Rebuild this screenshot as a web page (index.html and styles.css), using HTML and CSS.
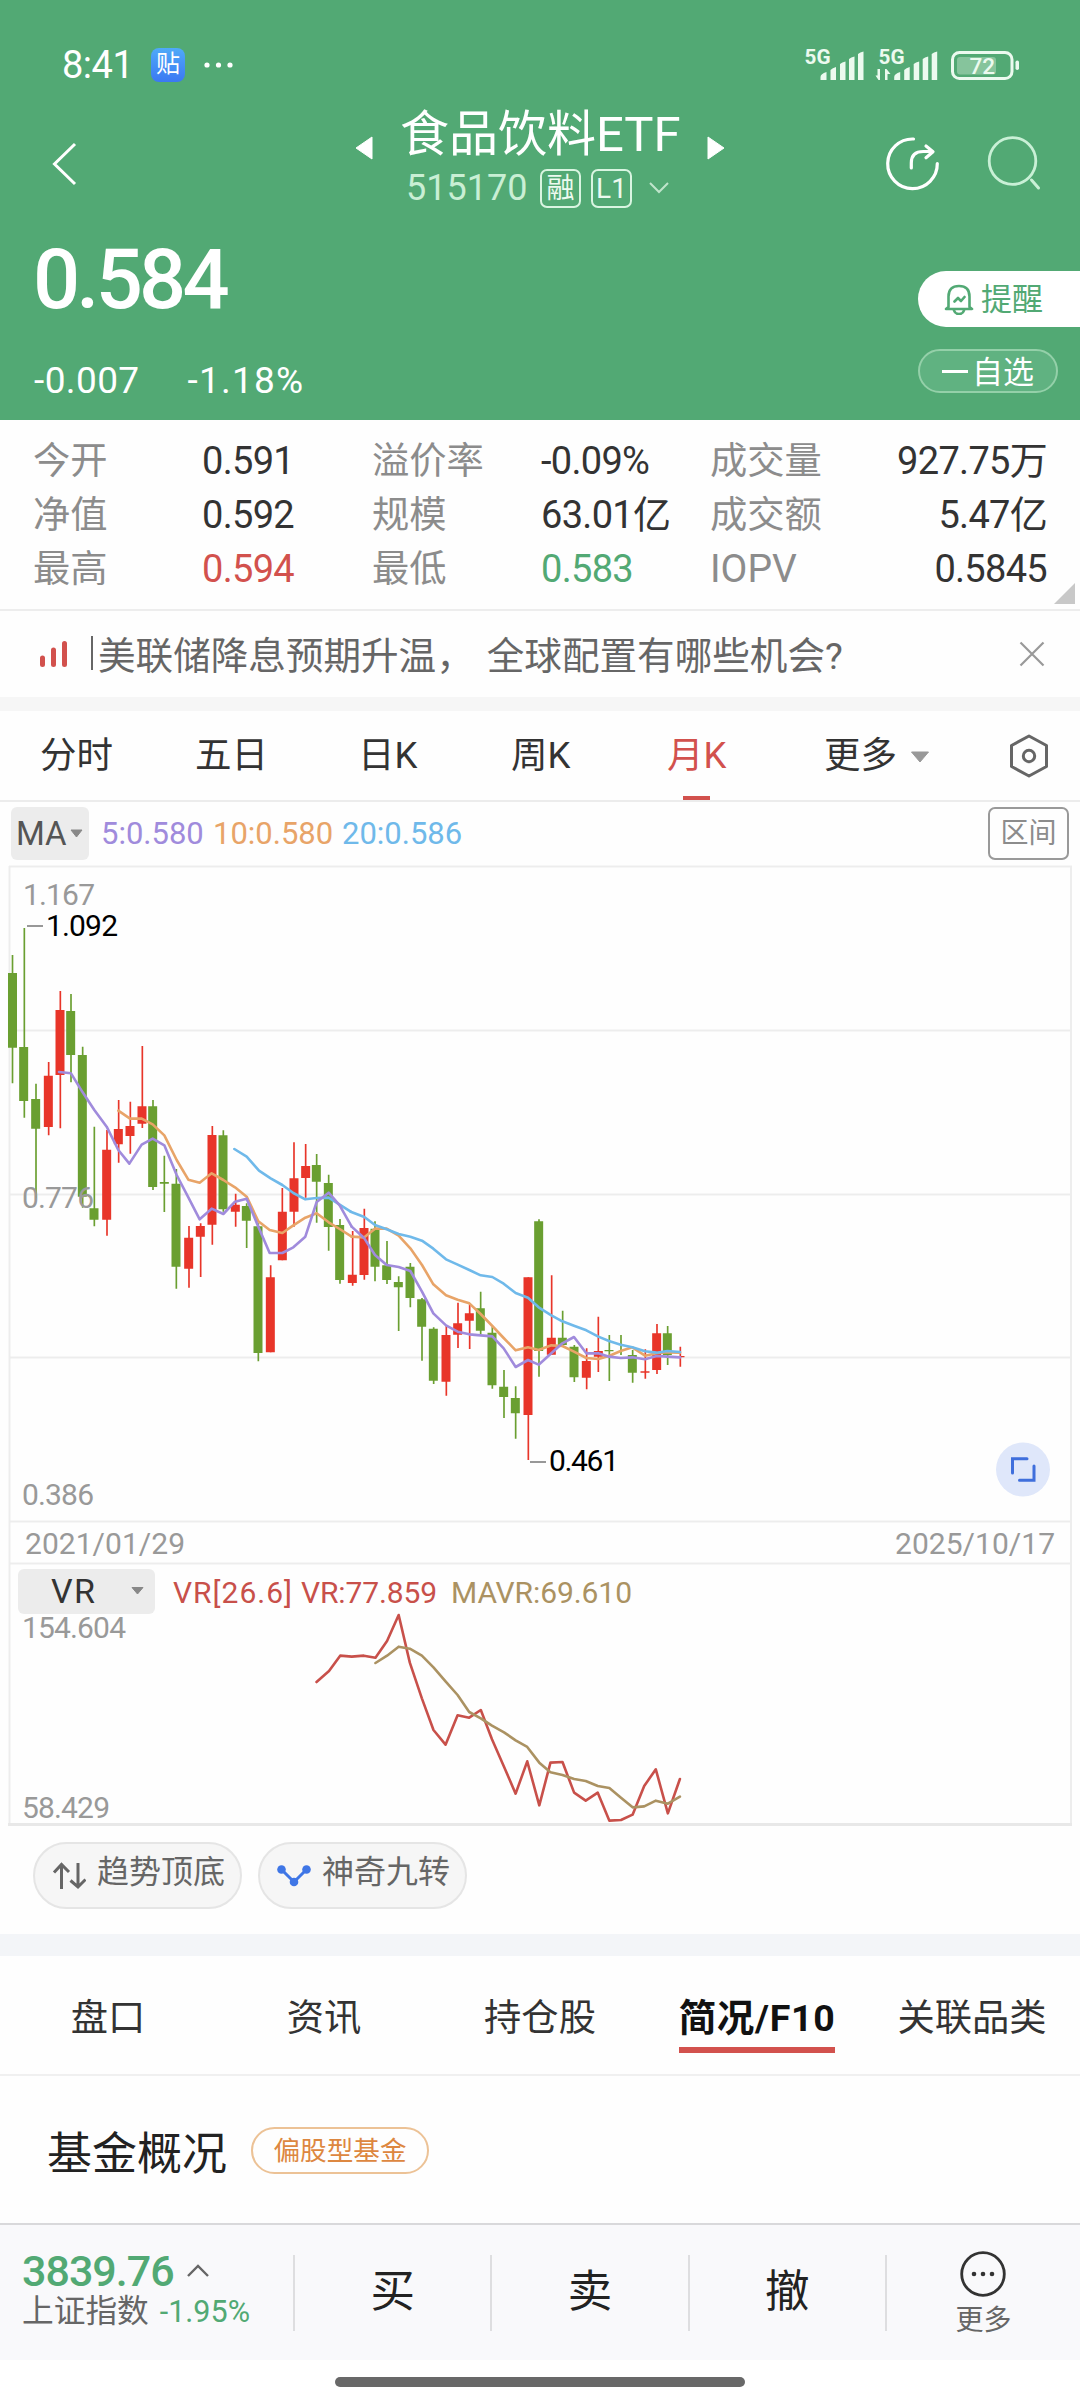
FILE: index.html
```html
<!DOCTYPE html>
<html lang="zh-CN">
<head>
<meta charset="utf-8">
<title>食品饮料ETF 515170</title>
<link rel="stylesheet" href="styles.css">
</head>
<body>
<header class="hero">
  <div class="status">
    <span class="clock">8:41</span>
    <span class="app-badge">贴</span>
    <svg class="dots" width="30" height="8" viewBox="0 0 30 8" fill="#fff"><circle cx="4" cy="4" r="2.6"/><circle cx="15.500" cy="4" r="2.600"/><circle cx="27" cy="4" r="2.600"/></svg>
    <svg class="signals" width="220" height="52" viewBox="803 38 220 52">
      <g fill="#ecfaef">
        <text x="804.500" y="63.300" class="net" textLength="26" lengthAdjust="spacingAndGlyphs">5G</text>
        <text x="878.500" y="63.300" class="net" textLength="26" lengthAdjust="spacingAndGlyphs">5G</text>
        <path id="bars" d="M820.500 79v-3q0-3 6-5v8zM830.500 79V69q2-2 5.500-3v13zM840 79V63q2-2 5.500-2.500V79zM849 79V58q2-2 5.500-2.500V79zM858 79V53q2-2 5.500-2.500V79z"/>
        <use href="#bars" x="73.700"/>
        <path d="M880 68v11h-1.500l-3-4.500h2V68zM885 79V68h1.500l4 5h-3v6z"/>
        <rect x="1015.500" y="59.500" width="3.500" height="9.500" rx="1.700"/>
      </g>
      <rect x="957" y="56" width="39" height="17.500" rx="3" fill="#86c49c"/>
      <rect x="952.500" y="51.500" width="59.500" height="26" rx="7" fill="none" stroke="#ecfaef" stroke-width="3"/>
      <text x="969.500" y="72.800" class="pct" fill="#ecfaef">72</text>
    </svg>
  </div>
  <div class="nav">
    <svg class="back" width="28" height="48" viewBox="0 0 28 48"><path d="M25 4 4.500 24 25 44" fill="none" stroke="#fff" stroke-width="3"/></svg>
    <svg class="tri" width="18" height="24" viewBox="0 0 18 24"><path d="M17 1v22L1 12z" fill="#fff" stroke="#fff" stroke-linejoin="round"/></svg>
    <div class="names">
      <h1>食品饮料ETF</h1>
      <div class="code"><span class="num">515170</span><span class="tag">融</span><span class="tag">L1</span>
        <svg width="22" height="14" viewBox="0 0 22 14"><path d="m2 2 9 9 9-9" fill="none" stroke="#bfe5cb" stroke-width="2"/></svg></div>
    </div>
    <svg class="tri" width="18" height="24" viewBox="0 0 18 24"><path d="M1 1v22l16-11z" fill="#fff" stroke="#fff" stroke-linejoin="round"/></svg>
    <svg class="tools" width="160" height="60" viewBox="884 134 160 60" fill="none" stroke-linecap="round" stroke-linejoin="round">
      <path d="M913.500 139A24.800 24.800 0 1 0 937.300 163.500M911.300 168v-5q0-11.500 12-11.500h9M926 146l7 5.700-7 6" stroke="#fff" stroke-width="3.200"/>
      <circle cx="1012.500" cy="161" r="23.300" stroke="#c9f0d6" stroke-width="2.800"/><path d="m1031.500 180 7 8" stroke="#c9f0d6" stroke-width="3"/>
    </svg>
  </div>
  <div class="quote">
    <div>
      <div class="price">0.584</div>
      <div class="change"><span>-0.007</span><span>-1.18%</span></div>
    </div>
    <div class="actions">
      <div class="remind">
        <svg width="32" height="32" viewBox="0 0 32 32" fill="none" stroke="#52a974" stroke-width="2.600" stroke-linecap="round" stroke-linejoin="round"><path d="M5.500 24V13.500Q5.500 3 16 3t10.500 10.500V24l2.500 2H3zM11 27.500q1 3.500 5 3.500t5-3.500M11.500 18.500l3.500-3.500 3 3 3.500-4"/></svg><span>提醒</span></div>
      <div class="watch"><i></i>自选</div>
    </div>
  </div>
</header>

<section class="stats">
  <span>今开</span><b>0.591</b><span>溢价率</span><b>-0.09%</b><span>成交量</span><b class="r">927.75万</b>
  <span>净值</span><b>0.592</b><span>规模</span><b>63.01亿</b><span>成交额</span><b class="r">5.47亿</b>
  <span>最高</span><b class="up">0.594</b><span>最低</span><b class="down">0.583</b><span class="en">IOPV</span><b class="r">0.5845</b>
  <svg class="corner" width="21" height="21" viewBox="0 0 21 21"><path d="M21 0v21H0z" fill="#c8c8c8"/></svg>
</section>

<section class="notice">
  <svg width="30" height="28" viewBox="0 0 30 28" stroke="#d2514d" stroke-width="5" stroke-linecap="round"><path d="M3.500 18v6.500M14.500 10v14.500M25.500 3.500v21"/></svg>
  <p><i></i>美联储降息预期升温，<span class="gap"></span>全球配置有哪些机会?</p>
  <svg width="26" height="26" viewBox="0 0 26 26"><path d="m1.500 1.500 23 23m0-23-23 23" stroke="#999" stroke-width="2.200"/></svg>
</section>

<nav class="periods">
  <span>分时</span><span>五日</span><span>日K</span><span>周K</span><span class="on">月K</span><span>更多</span>
  <svg width="20" height="12" viewBox="0 0 20 12"><path d="M1.500 1h17L10 11z" fill="#999" stroke="#999" stroke-linejoin="round"/></svg>
  <svg class="gear" width="42" height="46" viewBox="0 0 42 46" fill="none" stroke="#666" stroke-width="3" stroke-linejoin="round"><path d="m21 3 17.500 9.500v21L21 43 3.500 33.500v-21z"/><circle cx="21" cy="23" r="5.700"/></svg>
</nav>

<section class="ma">
  <div class="picker">MA<svg width="13" height="9" viewBox="0 0 13 9"><path d="M1 1h11L6.500 8z" fill="#888" stroke="#888" stroke-linejoin="round"/></svg></div>
  <span class="ma5">5:0.580</span><span class="ma10">10:0.580</span><span class="ma20">20:0.586</span>
  <div class="range">区间</div>
</section>

<section class="chart">
  <svg width="1080" height="961" viewBox="0 865 1080 961">
    <path class="grid" d="M9 866.500H1071V1823M9.500 866V1823M9 1030.500H1071M9 1194.500H1071M9 1357.500H1071M9 1521.500H1071M9 1563.500H1071"/>
    <path d="M8 1824.500H1072" stroke="#e8e8e8" stroke-width="3"/>
    <g class="candles" transform="translate(0 860) scale(.33333)">
      <path class="g wick" d="M37.500 285V670M73 204V773M108 671V1015M213 402V667M248 560V1043M283 800V1099M459 720V990M493 887V1056"/>
      <path class="g body" d="M37.500 339V563M71 561V723M107 717V806M212 453V585M247 585V1010M282 1045V1079M458 739V981M493 966V971"/>
      <path class="d wick" d="M146 606V826M181 393V805M321 810V1127M356 720V908M391 725V881M427 558V804"/>
      <path class="d body" d="M145 647V801M180 450V645M320 869V1079M355 807V853M390 798V828M426 739V791"/>
    </g>
    <g class="candles" transform="translate(0 1100) scale(.33333)">
      <path class="g wick" d="M529 207V566M670 91V335M740 310V444M775 370V784M950 162V368M986 224V452M1020 357V551"/>
      <path class="g body" d="M528 251V500M669 106V328M739 318V362M774 379V759M949 195V245M985 249V381M1019 375V540"/>
      <path class="d wick" d="M567 378V563M602 370V531M637 78V434M707 281V380M812 496V757M847 264V481M882 127V380M917 132V293M1058 393V557"/>
      <path class="d body" d="M566 413V506M601 378V410M636 105V374M706 314V335M811 532V757M847 335V481M882 235V335M917 198V234M1057 524V549"/>
    </g>
    <g class="candles" transform="translate(350 1020) scale(.33333)">
      <path class="g wick" d="M75 604V784M111 663V792M146 769V933M181 729V862M216 834V1022M251 922V1092M392 815V942M427 920V1106M462 1050V1194M497 1099V1256M567 598V1070M638 872V980M673 975V1086M778 945V1083M813 945V1005M848 990V1088M953 918V1035"/>
      <path class="g body" d="M75 626V740M110 736V780M145 786V802M180 740V834M215 838V920M250 926V1082M391 865V932M426 938V1096M461 1100V1131M496 1134V1180M566 604V993M637 953V975M672 980V1072M777 990V994M847 1005V1058M952 940V1005"/>
      <path class="d wick" d="M43 566V779M289 915V1127M324 848V984M359 850V987M535 772V1320M605 766V1004M710 985V1108M745 890V1056M886 988V1076M921 912V1062M991 980V1040"/>
      <path class="d body" d="M42 624V765M288 945V1085M323 910V944M358 880V902M534 772V1185M604 953V1004M709 1023V1073M745 993V1010M885 1054V1058M920 940V1050M990 1008V1012"/>
    </g>
    <g class="lines">
      <g transform="translate(0 860) scale(.33333)">
        <path stroke="#e8a468" d="M355 752 390 776 425 776 458 793 493 826 530 900 565 959 599 968 635 940 670 960 705 982 740 1010 775 1084 809 1110 847 1119 880 1096 916 1073 950 1060 986 1087 1019 1107 1055 1130"/>
        <path stroke="#6fb9ea" d="M703 867 740 890 777 932 812 955 847 975 880 999 916 1018 950 1014 986 1013 1019 1034 1052 1055"/>
        <path stroke="#a08bdc" d="M177 636 213 640 248 697 283 750 320 800 355 870 388 911 425 854 458 836 493 856 530 945 565 1012 599 1078 635 1046 670 1062 705 1025 740 1016 775 1100 809 1179 847 1179 880 1162 916 1130 950 1026 986 998 1019 1036 1055 1100"/>
      </g>
      <g transform="translate(350 1020) scale(.33333)">
        <path stroke="#e8a468" d="M5 650 43 652 75 626 110 626 146 647 181 685 216 735 250 793 288 826 323 839 358 850 392 882 427 918 461 954 497 991 534 982 566 990 604 976 637 978 672 995 709 1014 745 1017 777 1008 812 993 847 982 885 1007 920 1000 952 997 990 998"/>
        <path stroke="#6fb9ea" d="M2 575 43 591 75 615 110 628 146 642 181 650 216 662 250 686 288 718 323 734 358 750 392 766 427 771 461 791 497 819 534 833 566 862 604 886 637 904 672 917 709 931 745 950 777 963 812 974 847 982 885 994 920 998 952 993 990 996"/>
        <path stroke="#a08bdc" d="M5 620 43 655 75 705 110 735 146 741 181 753 216 815 250 880 288 916 323 935 358 943 392 946 427 949 461 985 497 1041 534 1020 566 1034 604 1000 637 970 672 951 709 1000 745 1000 777 1010 812 1014 847 1012 885 1018 920 1008 952 1010 990 1012"/>
      </g>
      <g transform="translate(0 1480) scale(.44643 .33333)">
        <path stroke="#c8504a" d="M709 606 737 573 762 527 788 530 815 527 841 533 867 483 893 405 918 548 945 655 971 750 998 794 1025 706 1051 713 1077 690 1102 778 1129 860 1155 941 1181 844 1208 976 1233 848 1260 846 1286 938 1312 962 1339 938 1365 1022 1391 1020 1417 1004 1443 918 1469 868 1496 1000 1523 897"/>
        <path stroke="#ab9262" d="M841 549 867 527 893 500 918 506 945 527 971 562 998 604 1025 645 1051 696 1077 715 1102 737 1129 757 1155 781 1181 801 1208 848 1233 877 1260 885 1286 897 1312 903 1339 918 1365 924 1391 953 1417 982 1443 979 1469 962 1496 971 1523 950"/>
      </g>
    </g>
    <path d="M27 926H43M530 1462H546" stroke="#777" stroke-width="1.500"/>
    <g class="axis">
      <text x="23" y="904.500" textLength="72">1.167</text>
      <text x="22" y="1207.500" textLength="72">0.776</text>
      <text x="22" y="1505" textLength="72">0.386</text>
      <text x="25" y="1553.500" textLength="160">2021/01/29</text>
      <text x="895" y="1553.500" textLength="160">2025/10/17</text>
      <text x="22" y="1638" textLength="104">154.604</text>
      <text x="22" y="1818" textLength="88">58.429</text>
      <g fill="#000"><text x="46" y="935.500" textLength="72">1.092</text><text x="549" y="1471" textLength="70">0.461</text></g>
      <rect x="18" y="1569" width="137" height="45" rx="6" fill="#ececec"/>
      <text x="51" y="1603" fill="#333" font-size="34" textLength="44">VR</text>
      <path d="M132 1587.500h11l-5.500 6.500z" fill="#888" stroke="#888" stroke-linejoin="round"/>
      <text x="173" y="1603" fill="#c8504a" textLength="119">VR[26.6]</text>
      <text x="301" y="1603" fill="#c8504a" textLength="136">VR:77.859</text>
      <text x="451" y="1603" fill="#ab9262" textLength="181">MAVR:69.610</text>
    </g>
    <circle cx="1023" cy="1469.500" r="27" fill="#dfe7fa"/>
    <path d="M1012.500 1473v-14.300h14.500M1034 1466v14.300h-14.500" fill="none" stroke="#3f6fdc" stroke-width="3" stroke-linecap="round"/>
  </svg>
</section>

<section class="signals-row">
  <div class="chip"><svg width="34" height="28" viewBox="0 0 34 28" fill="none" stroke="#666" stroke-width="3"><path d="M9.500 27V3M2 10.500 9.500 2.500 17 10M26 1v24M18.500 18.500l7.500 6.500 7.500-7.500"/></svg><span>趋势顶底</span></div>
  <div class="chip"><svg width="34" height="24" viewBox="0 0 34 24"><path d="m5 6 12 12L29 6" fill="none" stroke="#3f76e6" stroke-width="3"/><g fill="#3f76e6"><circle cx="4.500" cy="5.500" r="4.300"/><circle cx="29.500" cy="5.500" r="4.300"/><circle cx="17" cy="18" r="4.300"/></g></svg><span>神奇九转</span></div>
</section>

<nav class="sections">
  <span>盘口</span><span>资讯</span><span>持仓股</span><span class="on">简况/F10</span><span>关联品类</span>
</nav>

<section class="fund"><h2>基金概况</h2><span>偏股型基金</span></section>

<footer class="bar">
  <div class="index">
    <div class="pt">3839.76<svg width="24" height="14" viewBox="0 0 24 14"><path d="m2 12 10-10 10 10" fill="none" stroke="#666" stroke-width="2.400"/></svg></div>
    <div class="nm">上证指数<em>-1.95%</em></div>
  </div>
  <div class="act">买</div><div class="act">卖</div><div class="act">撤</div>
  <div class="more">
    <svg width="48" height="48" viewBox="0 0 48 48"><circle cx="24" cy="24" r="21.300" fill="none" stroke="#333" stroke-width="2.800"/><g fill="#333"><circle cx="15" cy="24" r="2.300"/><circle cx="24" cy="24" r="2.300"/><circle cx="33" cy="24" r="2.300"/></g></svg>更多</div>
</footer>
<div class="home"><i></i></div>
</body>
</html>
```
FILE: styles.css
```css
* { box-sizing: border-box; }
body {
  margin: 0;
  width: 1080px;
  height: 2403px;
  overflow: hidden;
  background: #fefefe;
  color: #333;
  font-family: Roboto, "Noto Sans CJK SC", sans-serif;
  font-size: 37px;
  white-space: nowrap;
}
svg { display: block; flex: none; }
h1, h2, p { margin: 0; font-weight: 400; }

.hero { height: 420px; background: #52a974; color: #fff; }
.status { display: flex; align-items: center; height: 98px; padding: 32px 57px 0 62px; }
.clock { width: 89px; font-size: 38px; letter-spacing: -.500px; }
.app-badge {
  width: 34px; height: 34px; border-radius: 8px; text-align: center;
  background: linear-gradient(#4faaf8, #3b78f3); font-size: 24px; line-height: 32px;
}
.dots { margin-left: 18px; }
.signals { margin-left: auto; }
.net { font: 700 20px Roboto, sans-serif; }
.pct { font: 500 22.500px Roboto, sans-serif; }

.nav { display: flex; height: 120px; padding-left: 50px; }
.back { margin-top: 42px; }
.tri { margin: 38px 0 0; }
.back + .tri { margin-left: 277px; }
.names { width: 281px; margin: 0 26px 0 27px; }
.names + .tri { margin-left: 0; }
h1 { height: 70px; font-size: 49px; line-height: 73px; }
.code { display: flex; align-items: center; height: 40px; padding-left: 6px; color: #c9efd4; }
.code .num { width: 134px; font-size: 36px; }
.tag {
  width: 41px; height: 39px; margin-right: 10px; border: 2px solid #d9f5e1; border-radius: 7px;
  color: #ecfaef; font-size: 28px; line-height: 35px; text-align: center;
}
.code svg { margin-left: 6px; }
.tools { margin: 36px 0 0 159px; }

.quote { display: flex; justify-content: space-between; height: 202px; }
.price { height: 120px; padding: 0 0 0 33px; font-size: 83px; line-height: 123px; font-weight: 500; letter-spacing: -3.800px; }
.change { display: flex; gap: 48px; padding: 21px 0 0 34px; line-height: 44px; letter-spacing: .400px; }
.change span + span { letter-spacing: 1.200px; }
.actions { width: 162px; padding-top: 53px; font-size: 31px; }
.remind {
  display: flex; align-items: center; gap: 6px; height: 56px; padding-left: 25px;
  border-radius: 28px 0 0 28px; background: #fff; color: #52a974;
}
.remind span { padding-bottom: 5px; }
.watch {
  display: flex; align-items: center; gap: 4px; width: 140px; height: 44px; margin-top: 22px;
  padding: 0 0 4px 22px; border: 2px solid #94d0a9; border-radius: 22px; background: #60b281;
}
.watch i { width: 26px; height: 3px; margin-top: 4px; background: #fff; }

.stats {
  position: relative; display: grid; grid-template-columns: 169px 170px 169px 169px 150px 1fr;
  grid-auto-rows: 54px; height: 191px; padding: 13px 33px 0; border-bottom: 2px solid #ededed;
  font-size: 37.300px; line-height: 56px;
}
.stats span { color: #8c8c8c; }
.stats .en { font-size: 39px; }
.stats b { font-weight: 400; font-size: 38px; letter-spacing: -.700px; }
.stats .r { text-align: right; }
.stats .up { color: #d2514d; }
.stats .down { color: #52a974; }
.corner { position: absolute; right: 5px; bottom: 5px; }

.notice {
  display: flex; align-items: center; height: 100px; padding: 0 35px 0 39px;
  border-bottom: 14px solid #f6f6f6; color: #666; font-size: 37.600px;
}
.notice p { flex: 1; display: flex; align-items: center; margin: -3px 0 0 22px; }
.notice i { width: 2px; height: 34px; margin-right: 5px; background: #666; }
.gap { width: 13px; }

.periods {
  display: grid; align-items: center; grid-template-columns: 155px 163px 153px 156px 157px 86px 98px 1fr;
  height: 91px; padding-left: 40px; border-bottom: 2px solid #ececec; font-size: 36.500px;
}
.periods span { line-height: 89px; }
.periods svg { margin-top: 3px; }
.periods .gear { margin-top: 1px; }
.periods .on {
  color: #d2514d;
  background: linear-gradient(#d2514d, #d2514d) 16px 100% / 27px 4px no-repeat;
}

.ma { display: flex; align-items: center; height: 63px; padding: 0 11px; font-size: 31px; }
.picker {
  display: flex; align-items: center; gap: 3px; width: 78px; height: 53px; padding-left: 5px; margin-right: 12px;
  border-radius: 6px; background: #ececec; color: #555; font-size: 33px;
}
.ma5 { width: 112px; color: #a08bdc; }
.ma10 { width: 129px; color: #e8a468; }
.ma20 { color: #6fb9ea; }
.range {
  width: 81px; height: 53px; margin-left: auto; border: 2px solid #999; border-radius: 7px;
  color: #8c8c8c; font-size: 28px; line-height: 49px; text-align: center;
}

.chart { height: 961px; }
.grid { fill: none; stroke: #ededed; stroke-width: 2; }
.g { stroke: #6a9f31; }
.d { stroke: #e83529; }
.wick { stroke-width: 5; }
.body { stroke-width: 27; }
.lines path { fill: none; stroke-width: 2.600; stroke-linejoin: round; stroke-linecap: round; vector-effect: non-scaling-stroke; }
.axis { font-size: 30px; fill: #999; }

.signals-row { display: flex; gap: 16px; height: 130px; padding: 16px 33px 0; border-bottom: 22px solid #f3f5f8; }
.chip {
  display: flex; align-items: center; gap: 11px; width: 209px; height: 67px; padding-left: 17px;
  border: 2px solid #e5e5e5; border-radius: 34px; background: #f6f6f6; color: #666; font-size: 32px; line-height: 50px;
}
.chip span { padding-bottom: 7px; }

.sections {
  display: grid; grid-template-columns: repeat(5, 216px); justify-items: center; height: 120px;
  border-bottom: 2px solid #f0f0f0; font-size: 37.300px; line-height: 124px;
}
.sections .on {
  margin-left: 2px; color: #111; font-weight: 700; font-size: 37.500px; letter-spacing: .700px;
  background: linear-gradient(#d2514d, #d2514d) 0 91px / 100% 6px no-repeat;
}

.fund { display: flex; align-items: center; height: 147px; padding: 3px 47px 1px; }
h2 { width: 204px; color: #222; font-size: 45px; }
.fund span {
  width: 178px; height: 47px; border: 2px solid #ecc296; border-radius: 24px; color: #dd8740;
  font-size: 26.600px; line-height: 43px; text-align: center;
}

.bar { display: flex; height: 137px; border-top: 2px solid #d9d9db; background: #f9f9fb; }
.index { flex: none; width: 293px; padding: 23px 0 0 22px; }
.pt { display: flex; align-items: center; gap: 12px; height: 46px; color: #52a974; font-size: 43px; letter-spacing: -1px; font-weight: 500; }
.nm { height: 40px; line-height: 36px; font-size: 31.700px; color: #666; }
.nm em { margin-left: 11px; color: #52a974; font-style: normal; font-size: 30.500px; }
.act, .more {
  flex: none; width: 197.300px; text-align: center;
  background: linear-gradient(#dedee0, #dedee0) 0 30px / 2px 76px no-repeat;
}
.act { padding-left: 2px; color: #222; font-size: 44.500px; line-height: 135px; }
.more { width: 197px; color: #666; font-size: 28px; line-height: 42px; }
.more svg { margin: 25px auto 2px; }
.home { display: flex; justify-content: center; height: 43px; padding-top: 17px; background: #fff; }
.home i { width: 410px; height: 10px; border-radius: 5px; background: #686868; }
```
